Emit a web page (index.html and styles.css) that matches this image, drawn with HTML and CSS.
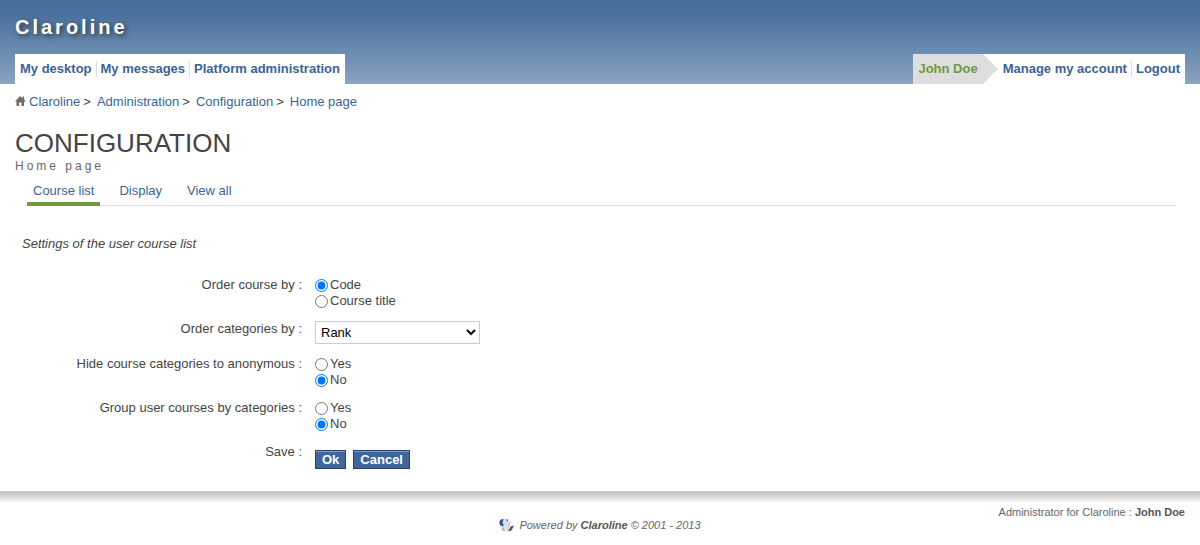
FILE: index.html
```html
<!DOCTYPE html>
<html lang="en">
<head>
<meta charset="utf-8">
<title>Configuration - Claroline</title>
<link rel="stylesheet" href="styles.css">
</head>
<body>
<header class="banner">
  <a class="site-name" href="#">Claroline</a>
  <div class="banner-menus">
    <nav class="menu">
      <a href="#">My desktop</a>
      <a href="#">My messages</a>
      <a href="#">Platform administration</a>
    </nav>
    <nav class="menu">
      <span class="user-name">John Doe</span>
      <a href="#">Manage my account</a>
      <a href="#">Logout</a>
    </nav>
  </div>
</header>
<nav class="breadcrumb">
  <a class="home" href="#"><svg width="11" height="10" viewBox="0 0 11 10" aria-hidden="true"><path fill="#776c64" d="M5 0 0 5.500h1.500V10H4V6.500h2.500V10H9V5.500h2L9 3.200V.5H7.500v1.800z"/></svg>Claroline</a><span>&gt;</span>
  <a href="#">Administration</a><span>&gt;</span>
  <a href="#">Configuration</a><span>&gt;</span>
  <a href="#">Home page</a>
</nav>
<main class="content">
  <h1 class="title">CONFIGURATION</h1>
  <p class="subtitle">Home page</p>
  <nav class="tabs">
    <a class="tab current" href="#">Course list</a>
    <a class="tab" href="#">Display</a>
    <a class="tab" href="#">View all</a>
  </nav>
  <form class="settings">
    <p class="description">Settings of the user course list</p>
    <div class="row" role="radiogroup" aria-labelledby="order-course">
      <span class="row-label" id="order-course">Order course by :</span>
      <div class="options">
        <label class="option"><input type="radio" name="order" checked>Code</label>
        <label class="option"><input type="radio" name="order">Course title</label>
      </div>
    </div>
    <div class="row">
      <label class="row-label" for="order-cat">Order categories by :</label>
      <select class="select" id="order-cat"><option>Rank</option></select>
    </div>
    <div class="row" role="radiogroup" aria-labelledby="hide-cat">
      <span class="row-label" id="hide-cat">Hide course categories to anonymous :</span>
      <div class="options">
        <label class="option"><input type="radio" name="hide">Yes</label>
        <label class="option"><input type="radio" name="hide" checked>No</label>
      </div>
    </div>
    <div class="row" role="radiogroup" aria-labelledby="group-cat">
      <span class="row-label" id="group-cat">Group user courses by categories :</span>
      <div class="options">
        <label class="option"><input type="radio" name="group">Yes</label>
        <label class="option"><input type="radio" name="group" checked>No</label>
      </div>
    </div>
    <div class="row">
      <span class="row-label">Save :</span>
      <div class="buttons">
        <button class="button" type="submit">Ok</button>
        <button class="button" type="button">Cancel</button>
      </div>
    </div>
  </form>
</main>
<footer class="footer">
  <p class="manager">Administrator for Claroline : <a href="#">John Doe</a></p>
  <p class="powered">
    <svg width="16" height="14" viewBox="0 0 16 14" aria-hidden="true">
      <path fill="#d9e1ec" d="M3 1h7v3L8 8l-2 5H3L1 7z"/>
      <path fill="#35568f" d="M4.500 1C1.500 1 0 3 .5 5.500 1 8 3 8.500 5 7.500L3.500 5z"/>
      <path fill="#4c6a9e" d="M7 1.500 9 1.500 8.500 4z"/>
      <path fill="#9fb2cd" d="M3 9.500h2l.5 3.500H4z"/>
      <path fill="#c4c9d0" d="M10 4l2-1-3 9-2 1z"/>
      <path fill="#55575c" d="M11.500 8.500 15 7.500 12.500 12.500 9 13.500z"/>
    </svg>
    <span>Powered by <a href="#">Claroline</a> © 2001 - 2013</span>
  </p>
</footer>
</body>
</html>
```
FILE: styles.css
```css
* { box-sizing: border-box; }

body {
  margin: 0;
  background: #fff;
  color: #444;
  font: 13px/16px "Liberation Sans", Arial, sans-serif;
}

a { color: #3b6395; text-decoration: none; }
p, h1 { margin: 0; }

.banner {
  padding: 15px 15px 0;
  background: linear-gradient(#486f9d 0, #486f9d 15%, #8aa3c0 100%);
}

.site-name {
  display: block;
  width: max-content;
  margin-bottom: 15px;
  color: #fff;
  font-size: 20px;
  line-height: 24px;
  font-weight: bold;
  letter-spacing: 3px;
  text-shadow: 2px 2px 5px #333;
}

.banner-menus { display: flex; justify-content: space-between; }

.menu {
  display: flex;
  align-items: center;
  height: 30px;
  background: #fff;
  font-weight: bold;
}

.menu a { padding: 0 4px 0 5px; }
.menu a + a { padding-left: 4px; border-left: 1px solid #ddd; }
.menu a:last-child { padding-right: 5px; }

.user-name {
  position: relative;
  align-self: stretch;
  margin-right: 15px;
  padding: 0 5px;
  background: #ddd;
  color: #6f9a3f;
  line-height: 30px;
}

.user-name::after {
  content: "";
  position: absolute;
  top: 0;
  left: 100%;
  border: solid transparent;
  border-width: 15px 0 15px 15px;
  border-left-color: #ddd;
}

.breadcrumb { display: flex; gap: 6px; padding: 10px 15px 0; }
.breadcrumb a:not(:last-child) { margin-right: -3px; }
.home svg { margin-right: 3px; }

.content { padding: 18px 15px 10px; }

.title { font-size: 26px; line-height: 30px; font-weight: normal; }

.subtitle { color: #666; font-size: 12px; line-height: 16px; letter-spacing: 3px; }

.tabs {
  display: flex;
  gap: 13px;
  margin: 9px 10px 0 10px;
  padding-left: 2px;
  border-bottom: 1px solid #ddd;
}

.tab { margin-bottom: -1px; padding: 0 6px 3px; border-bottom: 4px solid transparent; }
.current { border-color: #6f9a3f; }

.settings { padding: 30px 7px 0; }
.description { margin-bottom: 25px; font-style: italic; }

.row { display: flex; gap: 13px; margin-bottom: 12px; }
.row-label { width: 280px; text-align: right; }
.options { display: flex; flex-direction: column; }
.option { display: flex; align-items: center; gap: 2px; }
.option input { width: 13px; height: 13px; margin: 0; }

.select {
  width: 165px;
  height: 23px;
  padding: 0 1px;
  border: 1px solid #ccc;
  border-radius: 0;
  background: #fff;
  color: #000;
  font: inherit;
}

.buttons { display: flex; gap: 7px; padding-top: 6px; }

.button {
  height: 19px;
  padding: 0 6px;
  border: 1px solid #224570;
  background: #40679a;
  box-shadow: inset 0 1px #7f9fc4;
  color: #fff;
  font: inherit;
  font-weight: bold;
}

.footer {
  padding: 15px 15px 12px;
  background: linear-gradient(#c8c8c8, #c8c8c8 25%, #fff) top / 100% 12px no-repeat;
  color: #666;
  font-size: 11px;
  line-height: 12px;
}

.footer a { color: #555; font-weight: bold; }
.manager { text-align: right; }
.powered { display: flex; align-items: center; justify-content: center; gap: 4px; font-style: italic; }
```
